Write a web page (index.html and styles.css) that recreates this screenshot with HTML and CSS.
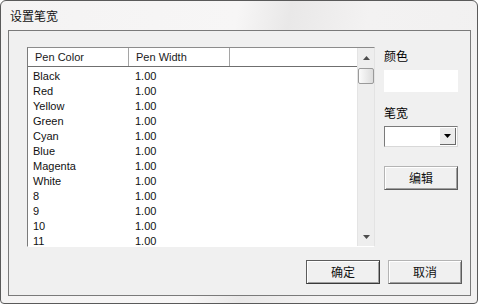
FILE: index.html
```html
<!DOCTYPE html>
<html>
<head>
    <title>设置笔宽</title>
    <meta charset="UTF-8">
    <link rel="stylesheet" href="styles.css">
</head>
<body>
<div class="window">
    <div class="titlebar">设置笔宽</div>
    <div class="client">
        <div class="top">
            <div class="list">
                <div class="list__body">
                    <div class="list__head">
                        <div class="col col--1">Pen Color</div>
                        <div class="col col--2">Pen Width</div>
                        <div class="col col--3"></div>
                    </div>
                    <div class="rows" id="rows"></div>
                </div>
                <div class="scroll">
                    <div class="scroll__arrow">
                        <svg viewBox="0 0 7 4" width="7" height="4"><path d="M0 4h7L3.5 0z"></path></svg>
                    </div>
                    <div class="scroll__thumb"></div>
                    <div class="fn__flex-1"></div>
                    <div class="scroll__arrow">
                        <svg viewBox="0 0 7 4" width="7" height="4"><path d="M0 0h7L3.5 4z"></path></svg>
                    </div>
                </div>
            </div>
            <div class="side">
                <div class="label">颜色</div>
                <div class="swatch"></div>
                <div class="label label--width">笔宽</div>
                <div class="combo">
                    <div class="fn__flex-1"></div>
                    <div class="combo__btn">
                        <svg viewBox="0 0 7 4" width="7" height="4"><path d="M0 0h7L3.5 4z"></path></svg>
                    </div>
                </div>
                <div class="btn btn--edit">编辑</div>
            </div>
        </div>
        <div class="bottom">
            <div class="btn btn--default">确定</div>
            <div class="btn">取消</div>
        </div>
    </div>
</div>
<script>
    const pens = ['Black', 'Red', 'Yellow', 'Green', 'Cyan', 'Blue', 'Magenta', 'White', '8', '9', '10', '11']
    document.getElementById('rows').innerHTML = pens.map(name =>
        `<div class="row"><div class="col col--1">${name}</div><div class="col col--2">1.00</div></div>`
    ).join('')
</script>
</body>
</html>
```

FILE: styles.css
```css
body {
    margin: 0;
    background-color: #fff;
    color: #000;
    font-family: "Liberation Sans", "Noto Sans CJK SC", sans-serif;
}

.fn__flex-1 {
    flex: 1;
}

.window {
    width: 478px;
    height: 304px;
    box-sizing: border-box;
    border: 1px solid #5a5a5a;
    border-radius: 6px 6px 4px 4px;
    background: linear-gradient(100deg, #f4f3f3 0%, #f7f6f6 45%, #e9e8e8 55%, #f3f2f2 70%, #f1f0f0 100%);
    display: flex;
    flex-direction: column;
    overflow: hidden;
}

.titlebar {
    height: 29px;
    line-height: 29px;
    padding-left: 9px;
    font-family: "Noto Sans CJK SC", sans-serif;
    font-size: 12px;
    color: #111;
}

.client {
    flex: 1;
    margin: 0 6px 7px 7px;
    border: 1px solid #7a7a7a;
    background-color: #f0f0f0;
    padding: 16px 11px 0 18px;
    display: flex;
    flex-direction: column;
}

.top {
    display: flex;
    gap: 9px;
}

.list {
    width: 348px;
    height: 200px;
    box-sizing: border-box;
    display: flex;
    border-top: 1px solid #8c8c8c;
    border-left: 1px solid #7b7b7b;
    border-right: 1px solid #e3e3e3;
    border-bottom: 1px solid #fff;
    background-color: #fff;
    overflow: hidden;
}

.list__body {
    flex: 1;
    overflow: hidden;
}

.list__head {
    display: flex;
    height: 18px;
    line-height: 18px;
    border-bottom: 1px solid #6f6f6f;
    font-size: 11px;
    color: #1a1a1a;
}

.list__head .col {
    border-right: 1px solid #a5a5a5;
    box-shadow: 1px 0 0 #fff;
    padding-left: 7px;
}

.col {
    box-sizing: border-box;
    padding-left: 6px;
    white-space: nowrap;
}

.col--1 {
    width: 101px;
}

.col--2 {
    width: 101px;
}

.col--3 {
    flex: 1;
    border-right: 0 !important;
}

.rows {
    padding-top: 2px;
}

.row {
    display: flex;
    height: 15px;
    line-height: 15px;
    font-size: 11px;
    color: #111;
}

.row .col--1 {
    padding-left: 5px;
}

.scroll {
    width: 16px;
    background-color: #eeeeee;
    border-left: 1px solid #e4e4e4;
    display: flex;
    flex-direction: column;
}

.scroll__arrow {
    height: 19px;
    display: flex;
    align-items: center;
    justify-content: center;
    fill: #4d4d4d;
}

.scroll__thumb {
    height: 14px;
    margin: 1px 0 0 0;
    border: 1px solid #9a9a9a;
    border-radius: 2px;
    background: linear-gradient(90deg, #fbfbfb, #dcdcdc);
}

.side {
    width: 74px;
    display: flex;
    flex-direction: column;
}

.label {
    height: 16px;
    line-height: 16px;
    font-family: "Noto Sans CJK SC", sans-serif;
    font-size: 12px;
    margin-top: 1px;
}

.swatch {
    height: 22px;
    margin-top: 6px;
    background-color: #fff;
}

.label--width {
    margin-top: 13px;
}

.combo {
    height: 21px;
    margin-top: 5px;
    box-sizing: border-box;
    border: 1px solid #7a7a7a;
    border-right-color: #d8d8d8;
    border-bottom-color: #d8d8d8;
    background-color: #fff;
    display: flex;
    padding: 1px;
}

.combo__btn {
    width: 16px;
    box-sizing: border-box;
    background-color: #ececec;
    border-right: 1px solid #6a6a6a;
    border-bottom: 1px solid #6a6a6a;
    display: flex;
    align-items: center;
    justify-content: center;
    fill: #000;
}

.btn {
    width: 74px;
    height: 24px;
    box-sizing: border-box;
    border: 1px solid #b4b4b4;
    border-right-color: #5c5c5c;
    border-bottom-color: #5c5c5c;
    box-shadow: inset 1px 1px 0 #fff, inset -1px -1px 0 #a0a0a0;
    background-color: #f0f0f0;
    text-align: center;
    line-height: 21px;
    font-family: "Noto Sans CJK SC", sans-serif;
    font-size: 12px;
    color: #111;
}

.btn--edit {
    margin-top: 19px;
}

.btn--default {
    border-color: #5c5c5c;
    border-right-color: #3a3a3a;
    border-bottom-color: #3a3a3a;
}

.bottom {
    display: flex;
    justify-content: flex-end;
    gap: 8px;
    margin-top: 13px;
    margin-right: -3px;
}
```
